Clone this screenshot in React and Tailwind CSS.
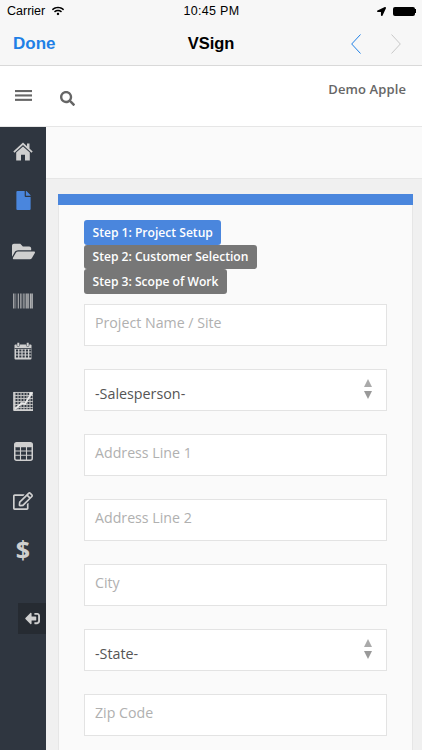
import React from "react";
import { FaFile, FaFolderOpen, FaBarcode, FaRegEdit, FaSignOutAlt, FaSearch, FaWifi, FaLocationArrow } from "react-icons/fa";

const open = "font-['Open_Sans',sans-serif]";
const lib = "font-['Liberation_Sans',sans-serif]";

function HomeIcon() {
  return (
    <svg width="20" height="19" viewBox="0 0 20 19" fill="#cfcfcf">
      <path d="M10 0.5L0.3 9.6L1.5 10.8L10 3L18.5 10.8L19.7 9.6L16.5 6.6V1.5H14V4.3Z" />
      <path d="M10 4.4L3.2 10.6V18.5H8V12.8H12V18.5H16.8V10.6Z" />
    </svg>
  );
}

function ChartIcon() {
  const lines = [];
  for (let i = 0; i <= 6; i++) {
    lines.push(<line key={"v" + i} x1={2 + i * 3} y1="1" x2={2 + i * 3} y2="19" stroke="#bdbdbd" strokeWidth="1.1" />);
    lines.push(<line key={"h" + i} x1="1" y1={1.5 + i * 3} x2="20" y2={1.5 + i * 3} stroke="#bdbdbd" strokeWidth="1.1" />);
  }
  return (
    <svg width="20" height="20" viewBox="0 0 20 20" fill="none">
      {lines}
      <path d="M1 1V19H20" stroke="#d8d8d8" strokeWidth="1.6" />
      <path d="M2 18L9 12L12 13L18 3" stroke="#e8e8e8" strokeWidth="1.8" />
      <circle cx="18" cy="2.6" r="1.7" fill="#e8e8e8" />
    </svg>
  );
}

function CalendarIcon() {
  const cells = [];
  for (let r = 0; r < 3; r++) {
    for (let c = 0; c < 5; c++) {
      cells.push(<rect key={r + "-" + c} x={2 + c * 3.3} y={7.5 + r * 3} width="2.1" height="2" fill="#2f3640" />);
    }
  }
  return (
    <svg width="18" height="18" viewBox="0 0 18 18" fill="none">
      <rect x="0.5" y="2.5" width="17" height="15" rx="1" fill="#cfcfcf" />
      <rect x="0.5" y="6" width="17" height="0.8" fill="#2f3640" />
      <rect x="3" y="0.5" width="2.5" height="4" rx="0.8" fill="#cfcfcf" stroke="#2f3640" strokeWidth="0.5" />
      <rect x="12.5" y="0.5" width="2.5" height="4" rx="0.8" fill="#cfcfcf" stroke="#2f3640" strokeWidth="0.5" />
      {cells}
    </svg>
  );
}

function TableIcon() {
  return (
    <svg width="19" height="19" viewBox="0 0 19 19" fill="none">
      <rect x="0.75" y="0.75" width="17.5" height="17.5" rx="2" stroke="#cfcfcf" strokeWidth="1.5" />
      <rect x="0.75" y="0.75" width="17.5" height="4.5" rx="1.5" fill="#cfcfcf" />
      <path d="M1 9H18M1 13.2H18M6.5 5V18M12.5 5V18" stroke="#cfcfcf" strokeWidth="1.1" />
    </svg>
  );
}

function BarsIcon() {
  return (
    <svg width="17" height="11" viewBox="0 0 17 11" fill="#666">
      <rect x="0" y="0" width="17" height="2.1" />
      <rect x="0" y="4.4" width="17" height="2.1" />
      <rect x="0" y="8.8" width="17" height="2.1" />
    </svg>
  );
}

const sideIcons = [
  <HomeIcon />,
  <FaFile size={19} className="text-[#4a86dd] -mt-[2px]" />,
  <FaFolderOpen size={23} />,
  <FaBarcode size={20} />,
  <CalendarIcon />,
  <ChartIcon />,
  <TableIcon />,
  <FaRegEdit size={20} />,
  <span className={`text-[25px] font-bold leading-none -mt-[3px] ${open}`}>$</span>,
];

function Field({ label }) {
  return (
    <div className={`h-[42px] border border-[#e3e3e3] bg-white flex items-center px-[10px] pb-[4px] text-[14.2px] text-[#b0b0b0] ${open}`}>
      {label}
    </div>
  );
}

function SelectField({ label }) {
  return (
    <div className={`h-[42px] border border-[#e3e3e3] bg-white flex items-center justify-between pl-[10px] pr-[14px] pt-[8px] text-[14.3px] text-[#555] ${open}`}>
      <span>{label}</span>
      <span className="flex flex-col gap-[4px] -mt-[10px]">
        <span className="w-0 h-0 border-x-[4px] border-x-transparent border-b-[8px] border-b-[#aaa]" />
        <span className="w-0 h-0 border-x-[4px] border-x-transparent border-t-[8px] border-t-[#999]" />
      </span>
    </div>
  );
}

function Step({ children, bg }) {
  return (
    <div className={`self-start h-[24.5px] flex items-center px-[8.5px] pt-px rounded-[3px] text-[12.1px] font-semibold text-white ${bg} ${open}`}>
      {children}
    </div>
  );
}

export default function App() {
  return (
    <div className="relative w-[422px] h-[750px] overflow-hidden bg-white flex flex-col">
      {/* iOS chrome */}
      <div className="shrink-0 h-[66px] bg-[#f7f7f7] border-b border-[#d9d9d9] flex flex-col">
        <div className={`h-[22px] flex items-center justify-between pl-[7px] pr-[6px] text-[12.5px] text-black ${lib}`}>
          <div className="flex-1 flex items-center gap-[7px]">
            <span>Carrier</span>
            <FaWifi size={12} />
          </div>
          <span className="text-[12.5px] font-medium tracking-[0.3px]">10:45 PM</span>
          <div className="flex-1 flex items-center justify-end gap-[7px]">
            <FaLocationArrow size={9} />
            <div className="flex items-center">
              <div className="w-[22px] h-[9px] rounded-[2px] bg-black" />
              <div className="w-[1.5px] h-[4px] bg-black" />
            </div>
          </div>
        </div>
        <div className={`flex-1 flex items-center justify-between pl-[13px] pr-[21px] ${lib}`}>
          <div className="flex-1 text-[17px] font-bold text-[#1f80e6]">Done</div>
          <div className="text-[16.5px] font-bold text-black ml-[8px]">VSign</div>
          <div className="flex-1 flex justify-end gap-[30px] items-center">
            <svg width="10" height="20" viewBox="0 0 10 20" fill="none"><path d="M9.5 0.5L0.7 10L9.5 19.5" stroke="#1f80e6" strokeWidth="1" /></svg>
            <svg width="10" height="20" viewBox="0 0 10 20" fill="none"><path d="M0.5 0.5L9.3 10L0.5 19.5" stroke="#c8c8c8" strokeWidth="1" /></svg>
          </div>
        </div>
      </div>

      {/* App header */}
      <div className={`shrink-0 h-[61px] bg-white border-b border-[#e6e6e6] flex items-start justify-between pl-[15px] pr-[16px] text-[#666] ${open}`}>
        <div className="flex items-start gap-[28px] pt-[24px]">
          <BarsIcon />
          <FaSearch size={15} className="mt-[1px]" />
        </div>
        <div className="text-[13px] font-semibold tracking-[0.1px] pt-[14px]">Demo Apple</div>
      </div>

      <div className="flex-1 flex min-h-0">
        {/* Sidebar */}
        <div className="w-[46px] shrink-0 bg-[#2f3640] flex flex-col items-center text-[#cfcfcf]">
          <div className="-mt-px w-full">
            {sideIcons.map((icon, i) => (
              <div key={i} className="h-[50px] w-full flex items-center justify-center">{icon}</div>
            ))}
          </div>
        </div>

        {/* Main */}
        <div className="flex-1 min-w-0 bg-[#f0f0f0] flex flex-col">
          <div className="shrink-0 h-[52px] bg-[#fafafa] border-b border-[#e6e6e6]" />
          <div className="flex-1 min-h-0 pt-[15px] pl-[12px] pr-[9px]">
            <div className="bg-[#fafafa] border-r border-[#e6e6e6] border-l h-[600px]">
              <div className="h-[11px] bg-[#4a86dd] -mx-px" />
              <div className="pl-[25px] pr-[25px] pt-[15px] flex flex-col">
                <Step bg="bg-[#4a86dd]">Step 1: Project Setup</Step>
                <Step bg="bg-[#777777]">Step 2: Customer Selection</Step>
                <Step bg="bg-[#777777]">Step 3: Scope of Work</Step>
                <div className="flex flex-col gap-[23px] mt-[10.5px]">
                  <Field label="Project Name / Site" />
                  <SelectField label="-Salesperson-" />
                  <Field label="Address Line 1" />
                  <Field label="Address Line 2" />
                  <Field label="City" />
                  <SelectField label="-State-" />
                  <Field label="Zip Code" />
                </div>
              </div>
            </div>
          </div>
        </div>
      </div>

      {/* Logout tab overlays the sidebar */}
      <div className="absolute left-[18px] top-[603px] w-[28px] h-[31px] bg-[#262b32] flex items-center justify-center text-[#cfcfcf]">
        <FaSignOutAlt size={15} className="rotate-180" />
      </div>
    </div>
  );
}
